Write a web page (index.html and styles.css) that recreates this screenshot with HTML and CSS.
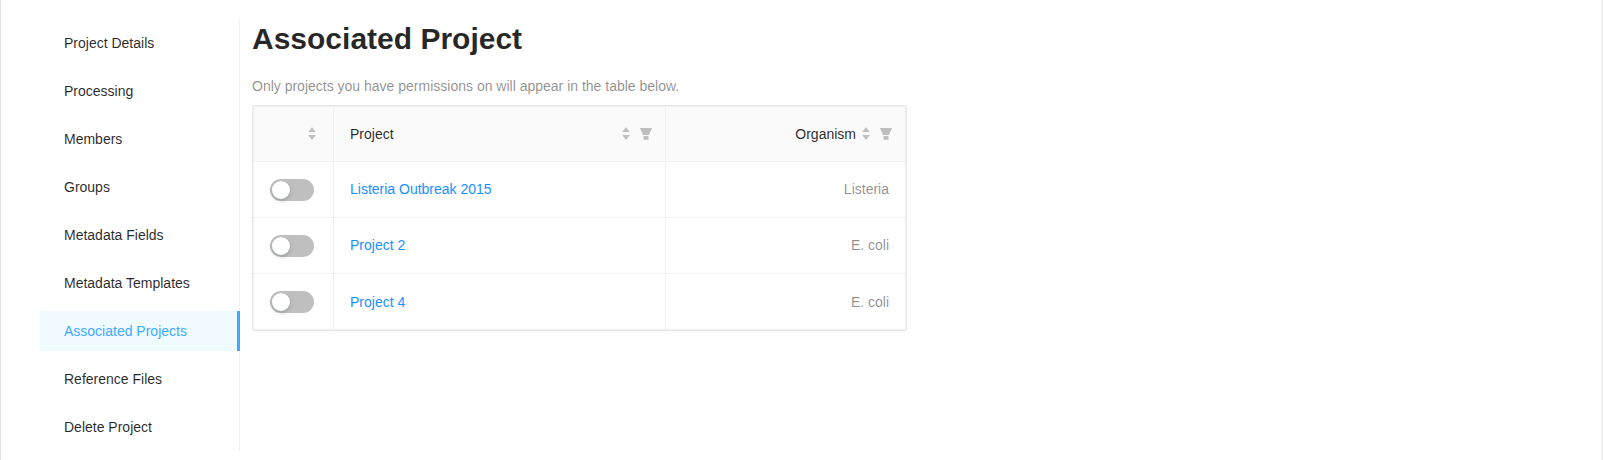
FILE: index.html
```html
<!DOCTYPE html>
<html lang="en">
<head>
<meta charset="utf-8">
<title>Associated Project</title>
<link rel="stylesheet" href="styles.css">
</head>
<body>
<svg class="defs" width="0" height="0" aria-hidden="true">
  <symbol id="sorter" viewBox="0 0 8 13"><path d="M4 .2 7.8 5H.2zM.2 8.1h7.6L4 12.9z"/></symbol>
  <symbol id="filter" viewBox="0 0 12 12"><path d="M.4 0h11.2q.6.1.3.6L8.8 7H3.2L.1.6Q-.2.1.4 0zM3.5 8h5v3.3q0 .5-.5.5H4q-.5 0-.5-.5z"/></symbol>
</svg>
<div class="page">
  <nav class="menu">
    <a class="menu-item">Project Details</a>
    <a class="menu-item">Processing</a>
    <a class="menu-item">Members</a>
    <a class="menu-item">Groups</a>
    <a class="menu-item">Metadata Fields</a>
    <a class="menu-item">Metadata Templates</a>
    <a class="menu-item selected">Associated Projects</a>
    <a class="menu-item">Reference Files</a>
    <a class="menu-item">Delete Project</a>
  </nav>
  <main class="content">
    <h1 class="title">Associated Project</h1>
    <p class="note">Only projects you have permissions on will appear in the table below.</p>
    <div class="table">
      <div class="row head">
        <div class="cell toggle-cell"><svg class="sorter"><use href="#sorter"/></svg></div>
        <div class="cell"><span class="label">Project</span><svg class="sorter"><use href="#sorter"/></svg><svg class="filter"><use href="#filter"/></svg></div>
        <div class="cell organism"><span>Organism</span><svg class="sorter"><use href="#sorter"/></svg><svg class="filter"><use href="#filter"/></svg></div>
      </div>
      <div class="row">
        <div class="cell"><span class="switch"></span></div>
        <div class="cell"><a class="link">Listeria Outbreak 2015</a></div>
        <div class="cell organism">Listeria</div>
      </div>
      <div class="row">
        <div class="cell"><span class="switch"></span></div>
        <div class="cell"><a class="link">Project 2</a></div>
        <div class="cell organism">E. coli</div>
      </div>
      <div class="row last">
        <div class="cell"><span class="switch"></span></div>
        <div class="cell"><a class="link">Project 4</a></div>
        <div class="cell organism">E. coli</div>
      </div>
    </div>
  </main>
</div>
</body>
</html>
```
FILE: styles.css
```css
* { box-sizing: border-box; }
body {
  margin: 0;
  background: #fff;
  color: rgba(0, 0, 0, 0.85);
  font: 14px/21px "Liberation Sans", Arial, sans-serif;
}
.defs { display: block; }
.page {
  display: flex;
  height: 460px;
  padding: 19px 0 9px 39px;
  border-left: 1px solid #e0e0e0;
  border-right: 2px solid #f0f0f0;
}
.menu {
  display: flex;
  flex-direction: column;
  gap: 8px;
  width: 200px;
  padding: 4px 0;
  border-right: 1px solid #f0f0f0;
}
.menu-item {
  height: 40px;
  padding-left: 24px;
  line-height: 40px;
}
.menu-item.selected {
  margin-right: -1px;
  border-right: 3px solid #40a9ff;
  background: #f0fbff;
  color: #40a9ff;
}
.content { width: 655px; margin-left: 12px; }
.title {
  margin: 0;
  font-size: 30px;
  line-height: 40px;
  font-weight: 700;
}
.note {
  margin: 17px 0 8px;
  color: rgba(0, 0, 0, 0.45);
}
.table {
  border: 1px solid #e8e8e8;
  border-radius: 2px;
  box-shadow: inset 0 0 0 1px #f0f0f0;
  padding: 1px;
}
.row {
  display: grid;
  grid-template-columns: 80px 332px 1fr;
  height: 56px;
  border-bottom: 1px solid #f0f0f0;
}
.row.head { height: 55px; background: #fafafa; }
.row.last { height: 55px; border-bottom: 0; }
.cell {
  display: flex;
  align-items: center;
  padding: 0 16px;
  border-right: 1px solid #f0f0f0;
}
.cell.organism {
  justify-content: flex-end;
  border-right: 0;
  color: rgba(0, 0, 0, 0.45);
}
.head .cell { padding-right: 13px; color: rgba(0, 0, 0, 0.85); }
.head .toggle-cell { justify-content: flex-end; padding-right: 17px; }
.label { flex: 1; }
.last .link, .last .organism { padding-top: 2px; }
.sorter { width: 8px; height: 13px; margin: 0 0 1px 6px; fill: #bfbfbf; }
.filter { width: 12px; height: 12px; margin-left: 10px; fill: #bfbfbf; }
.link { color: #1890ff; }
.switch {
  width: 44px;
  height: 22px;
  padding: 2px;
  border-radius: 11px;
  background: #bfbfbf;
}
.switch::before {
  content: "";
  display: block;
  width: 18px;
  height: 18px;
  border-radius: 50%;
  background: #fff;
  box-shadow: 0 2px 4px rgba(0, 35, 11, 0.2);
}
```
